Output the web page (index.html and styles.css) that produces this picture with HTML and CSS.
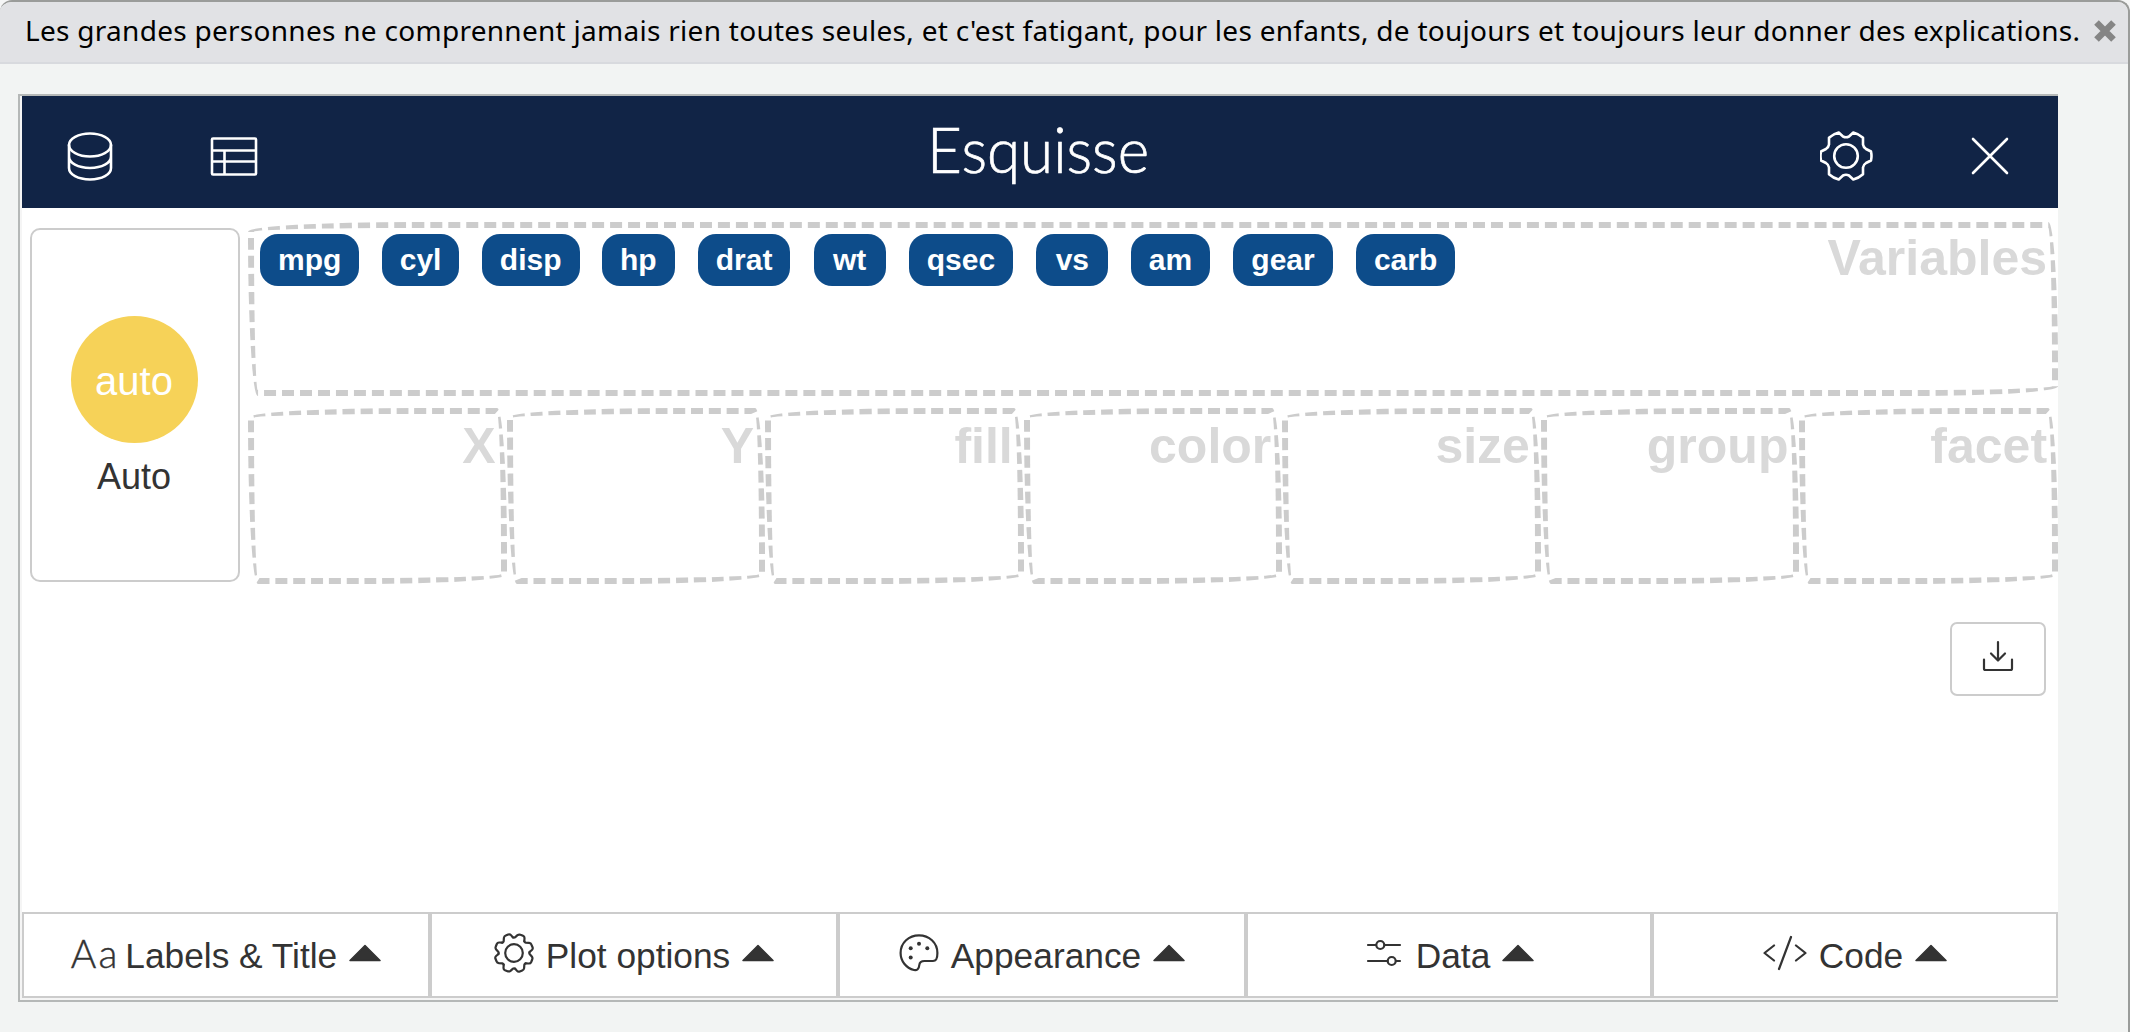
FILE: index.html
```html
<!DOCTYPE html>
<html lang="fr">
<head>
<meta charset="utf-8">
<title>Esquisse</title>
<link rel="stylesheet" href="styles.css">
</head>
<body>
<div class="window">
  <div class="titlebar">
    <span class="quote">Les grandes personnes ne comprennent jamais rien toutes seules, et c'est fatigant, pour les enfants, de toujours et toujours leur donner des explications.</span>
    <svg class="dismiss" width="24" height="24" viewBox="0 0 24 24"><path d="M3.500 3.500l17 17M20.500 3.500l-17 17"/></svg>
  </div>
  <div class="frame">
    <div class="app">
      <header class="header">
        <div class="tools">
          <svg class="ico" width="48" height="52" viewBox="0 0 48 52"><ellipse cx="24" cy="15" rx="21" ry="11.5"/><path d="M3 15v23c0 6.500 9 11.500 21 11.500s21-5 21-11.500V15M3 26.500C3 33 12 38 24 38s21-5 21-11.500"/></svg>
          <svg class="ico" width="48" height="52" viewBox="0 0 48 52"><path d="M2 9.500q0-1 1-1h42q1 0 1 1v34q0 1-1 1H3q-1 0-1-1zM2 20.500h44M2 31.500h44M14.500 20.500v24"/></svg>
        </div>
        <h1 class="brand">Esquisse</h1>
        <div class="tools tools-end">
          <svg class="ico" width="54" height="52" viewBox="-26 -26 54 52"><circle r="11.800"/><path d="M-3 -19.500Q0 -18 3 -19.500L7.300 -23.500Q13 -22 17 -18.300L17 -11.500Q17.500 -8.500 20 -7L25 -4.500Q26 0 25 4.500L20 7Q17.500 8.500 17 11.500L17 18.300Q13 22 7.300 23.500L3 19.500Q0 18 -3 19.500L-7.300 23.500Q-13 22 -17 18.300L-17 11.500Q-17.500 8.500 -20 7L-25 4.500Q-26 0 -25 -4.500L-20 -7Q-17.500 -8.500 -17 -11.500L-17 -18.300Q-13 -22 -7.300 -23.500Z"/></svg>
          <svg class="ico" width="40" height="52" viewBox="0 0 40 52"><path d="M3 9l34 34M37 9L3 43"/></svg>
        </div>
      </header>

      <main class="builder">
        <button class="geom">
          <span class="geom-badge">auto</span>
          <span class="geom-name">Auto</span>
        </button>
        <div class="zones">
          <div class="zone zone-vars">
            <span class="zone-label">Variables</span>
            <span class="chip">mpg</span><span class="chip">cyl</span><span class="chip">disp</span><span class="chip">hp</span><span class="chip spaced">drat</span><span class="chip spaced">wt</span><span class="chip spaced">qsec</span><span class="chip spaced">vs</span><span class="chip">am</span><span class="chip spaced">gear</span><span class="chip spaced">carb</span>
          </div>
          <div class="aesthetics">
            <div class="zone"><span class="zone-label">X</span></div>
            <div class="zone"><span class="zone-label">Y</span></div>
            <div class="zone"><span class="zone-label">fill</span></div>
            <div class="zone"><span class="zone-label">color</span></div>
            <div class="zone"><span class="zone-label">size</span></div>
            <div class="zone"><span class="zone-label">group</span></div>
            <div class="zone"><span class="zone-label">facet</span></div>
          </div>
        </div>
      </main>

      <section class="plot">
        <button class="download">
          <svg class="ico" width="32" height="32" viewBox="0 0 32 32"><path d="M16 2v18M9 13.500l7 7 7-7M2 19.500v9q0 1.500 1.500 1.500h25q1.500 0 1.500-1.500v-9"/></svg>
        </button>
      </section>

      <footer class="controls">
        <button class="control"><span class="case">Aa</span><span>Labels &amp; Title</span><svg class="caret" width="32" height="18" viewBox="0 0 32 18"><path d="M16 1.500L31 16.500H1z"/></svg></button>
        <button class="control">
          <svg class="ico" width="40" height="40" viewBox="-20 -20 40 40"><defs><path id="tooth" d="M-1 -15.600Q0 -15 1 -15.600L3.500 -17.800Q5 -18.900 6.500 -18.200L9 -17.200Q10.600 -16.500 10.500 -14.800L10.300 -11.700"/></defs><circle r="8.800"/><use href="#tooth"/><use href="#tooth" transform="rotate(45)"/><use href="#tooth" transform="rotate(90)"/><use href="#tooth" transform="rotate(135)"/><use href="#tooth" transform="rotate(180)"/><use href="#tooth" transform="rotate(225)"/><use href="#tooth" transform="rotate(270)"/><use href="#tooth" transform="rotate(315)"/></svg>
          <span>Plot options</span><svg class="caret" width="32" height="18" viewBox="0 0 32 18"><path d="M16 1.500L31 16.500H1z"/></svg></button>
        <button class="control">
          <svg class="ico" width="40" height="40" viewBox="0 -1 40 40"><path d="M20 1.300C30 1.300 38.400 8.500 38.400 19C38.400 24.500 37.500 27 34 27H25.500C22 27 20.600 28 20.300 31C20 35 18 36.600 15 36C7 34 1.600 27 1.600 19C1.600 8.500 10 1.300 20 1.300Z"/><g class="dots"><circle cx="11.700" cy="14.300" r="2"/><circle cx="20" cy="9.700" r="2"/><circle cx="28.300" cy="14.300" r="2"/><circle cx="11.700" cy="23.500" r="2"/></g></svg>
          <span>Appearance</span><svg class="caret" width="32" height="18" viewBox="0 0 32 18"><path d="M16 1.500L31 16.500H1z"/></svg></button>
        <button class="control narrow">
          <svg class="ico" width="40" height="40" viewBox="0 0 40 40"><path d="M4 12h8M20.500 12H36M4 28h19.500M32 28h4"/><circle cx="16.300" cy="12" r="4"/><circle cx="27.700" cy="28" r="4"/></svg>
          <span>Data</span><svg class="caret" width="32" height="18" viewBox="0 0 32 18"><path d="M16 1.500L31 16.500H1z"/></svg></button>
        <button class="control narrow">
          <svg class="ico" width="44" height="40" viewBox="0 0 44 40"><path d="M11 12.500L1.500 20l9.500 7.500M33 12.500l9.500 7.500-9.500 7.500M28 4L16 36"/></svg>
          <span>Code</span><svg class="caret" width="32" height="18" viewBox="0 0 32 18"><path d="M16 1.500L31 16.500H1z"/></svg></button>
      </footer>
    </div>
  </div>
</div>
</body>
</html>
```
FILE: styles.css
```css
* { box-sizing: border-box; }

body {
  margin: 0;
  background: #f5f6f6;
  font-family: "Liberation Sans", Arial, sans-serif;
  color: #333;
}

button {
  font: inherit;
  color: inherit;
  padding: 0;
  background: #fff;
}

.window {
  height: 1032px;
  border-top: 2px solid #9a9c9a;
  border-right: 2px solid #9a9c9a;
  border-radius: 12px 12px 0 0;
  background: #f2f4f3;
  overflow: hidden;
}

.titlebar {
  display: flex;
  align-items: center;
  justify-content: space-between;
  height: 62px;
  padding: 0 11px 4px 25px;
  border-bottom: 2px solid #d8dade;
  background: #e1e2e5;
}

.quote {
  font-family: "Noto Sans", sans-serif;
  font-size: 28px;
  line-height: 40px;
  letter-spacing: 0.28px;
  color: #000;
  white-space: nowrap;
}

.dismiss {
  flex: none;
  margin-top: 2px;
  fill: none;
  stroke: #858585;
  stroke-width: 6.500;
}

.frame {
  width: 2040px;
  height: 908px;
  margin: 30px 0 0 18px;
  padding: 0 0 2px 2px;
  border: 2px solid #b5b8b7;
  border-right: 0;
  background: #f5f5f5;
}

.app {
  display: flex;
  flex-direction: column;
  height: 902px;
  background: #fff;
}

.ico {
  flex: none;
  fill: none;
  stroke: currentColor;
  stroke-width: 2.2;
  stroke-linecap: round;
  stroke-linejoin: round;
}

.dots {
  fill: currentColor;
  stroke: none;
}

.header {
  display: flex;
  align-items: center;
  justify-content: space-between;
  height: 112px;
  padding: 8px 48px 0 44px;
  background: #112446;
  color: #fff;
}

.header .ico { stroke-width: 2.6; }

.tools {
  display: flex;
  width: 320px;
  gap: 96px;
}

.tools-end { justify-content: flex-end; }

.brand {
  margin: 0 0 14px;
  font-family: Lato, sans-serif;
  font-weight: 300;
  font-size: 64px;
  line-height: 80px;
  transform: scaleX(0.94);
  -webkit-text-stroke: 0.7px #fff;
}

.builder {
  display: flex;
  gap: 8px;
  padding: 14px 0 0 8px;
}

.geom {
  display: flex;
  flex-direction: column;
  align-items: center;
  width: 210px;
  height: 354px;
  margin-top: 6px;
  padding: 86px 2px 0 0;
  border: 2px solid #ccc;
  border-radius: 10px;
}

.geom-badge {
  width: 127px;
  height: 127px;
  border-radius: 50%;
  background: #f6d258;
  color: #fff;
  font-size: 40px;
  line-height: 130px;
  text-align: center;
}

.geom-name {
  margin-top: 14px;
  font-size: 36px;
  line-height: 40px;
}

.zones {
  display: flex;
  flex-direction: column;
  gap: 12px;
  width: 1810px;
}

.zone {
  position: relative;
  flex: 1;
  border: 6px dashed #ccc;
  border-radius: 510px 30px 450px 30px / 30px 450px 30px 510px;
}

.zone-vars {
  display: flex;
  flex: none;
  align-items: flex-start;
  gap: 22.4px;
  height: 174px;
  padding: 6px;
}

.aesthetics {
  display: flex;
  height: 176px;
}

.zone-label {
  position: absolute;
  top: 7px;
  right: 5px;
  font-size: 50px;
  font-weight: bold;
  line-height: 50px;
  color: #d9d9d9;
}

.zone-vars .zone-label { top: 5px; }

.chip {
  position: relative;
  min-width: 72px;
  padding: 0 18px;
  border-radius: 18px;
  background: #0d4c8a;
  color: #fff;
  font-size: 30px;
  font-weight: bold;
  line-height: 52px;
  text-align: center;
}

.spaced { margin-left: 0.8px; }

.plot {
  display: flex;
  flex: 1;
  align-items: flex-start;
  justify-content: flex-end;
  padding: 38px 12px 0 0;
}

.download {
  display: flex;
  align-items: center;
  justify-content: center;
  width: 96px;
  height: 74px;
  padding-bottom: 6px;
  border: 2px solid #ccc;
  border-radius: 7px;
}

.controls {
  display: flex;
  height: 86px;
}

.control {
  display: flex;
  flex: none;
  width: 408px;
  align-items: center;
  justify-content: center;
  gap: 12px;
  border: 2px solid #ccc;
  font-size: 35.3px;
  line-height: 40px;
  padding-top: 1px;
  white-space: nowrap;
}

.narrow { width: 406px; }

.control .ico { margin-bottom: 5px; }

.case {
  margin-right: -6px;
  margin-bottom: 5px;
  font-family: Lato, sans-serif;
  font-weight: 300;
  font-size: 39px;
  letter-spacing: 2px;
  -webkit-text-stroke: 0.4px #333;
}

.caret {
  margin-bottom: 6px;
  fill: #333;
  stroke: #333;
  stroke-width: 1.5;
  stroke-linejoin: round;
}
```
